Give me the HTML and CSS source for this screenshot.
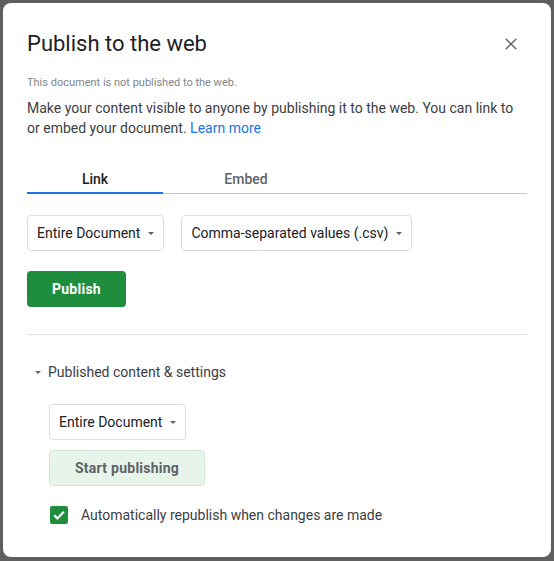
FILE: index.html
```html
<!DOCTYPE html>
<html>
<head>
<meta charset="utf-8">
<link rel="stylesheet" href="styles.css">
</head>
<body>
<div class="dialog">
  <div class="header">
    <h1 class="title">Publish to the web</h1>
    <button class="close" aria-label="Close">
      <svg width="12" height="12" viewBox="0 0 12 12"><path d="M0.7 0.7L11.3 11.3M11.3 0.7L0.7 11.3" stroke="#5f6368" stroke-width="1.4" fill="none"/></svg>
    </button>
  </div>
  <p class="status">This document is not published to the web.</p>
  <p class="desc">Make your content visible to anyone by publishing it to the web. You can link to or embed your document. <a class="link" href="#">Learn more</a></p>
  <div class="tabs">
    <div class="tab active">Link</div>
    <div class="tab embed">Embed</div>
  </div>
  <div class="row">
    <div class="select">Entire Document<span class="caret"></span></div>
    <div class="select">Comma-separated values (.csv)<span class="caret"></span></div>
  </div>
  <button class="btn primary">Publish</button>
  <hr class="divider">
  <div class="section-head"><span class="caret"></span>Published content &amp; settings</div>
  <div class="section-body">
    <div class="select">Entire Document<span class="caret"></span></div>
    <button class="btn secondary">Start publishing</button>
    <label class="check"><span class="box"><svg width="18" height="18" viewBox="0 0 18 18"><path d="M4.2 9.3L7.4 12.4L13.8 5.8" stroke="#fff" stroke-width="2.2" fill="none"/></svg></span>Automatically republish when changes are made</label>
  </div>
</div>
</body>
</html>
```
FILE: styles.css
```css
html, body {
  margin: 0;
  background: #5f5f5f;
}
body {
  padding: 3px;
  font-family: Roboto, "Noto Sans", Arial, sans-serif;
}
.dialog {
  width: 548px;
  height: 554px;
  box-sizing: border-box;
  background: #fff;
  border-radius: 8px;
  padding: 27px 24px 0;
}
.header {
  display: flex;
  align-items: center;
  justify-content: space-between;
  height: 28px;
}
.title {
  margin: 0;
  font-size: 22px;
  line-height: 28px;
  font-weight: 400;
  color: #202124;
}
.close {
  width: 24px;
  height: 24px;
  border: 0;
  background: none;
  padding: 0;
  margin-right: 4px;
  display: flex;
  align-items: center;
  justify-content: center;
}
.status {
  margin: 17px 0 0;
  font-size: 11px;
  line-height: 16px;
  color: #80868b;
}
.desc {
  margin: 7px 0 0;
  font-size: 14px;
  line-height: 20px;
  color: #3c4043;
}
.link {
  color: #1a73e8;
  text-decoration: none;
}
.tabs {
  display: flex;
  margin-top: 20px;
  border-bottom: 1px solid #c4c7c5;
}
.tab {
  width: 136px;
  text-align: center;
  padding: 11px 0 3px;
  font-size: 14px;
  line-height: 20px;
  font-weight: 500;
  color: #5f6368;
  border-bottom: 2px solid transparent;
  margin-bottom: -1px;
}
.tab.active {
  color: #202124;
  border-bottom-color: #1a73e8;
}
.tab.embed {
  width: 166px;
}
.row {
  display: flex;
  gap: 17px;
  margin-top: 21px;
}
.select {
  display: inline-flex;
  align-items: center;
  height: 36px;
  box-sizing: border-box;
  border: 1px solid #dadce0;
  border-radius: 4px;
  padding: 0 9px 0 9px;
  font-size: 14px;
  color: #202124;
  gap: 8px;
}
.caret {
  width: 0;
  height: 0;
  border-left: 3px solid transparent;
  border-right: 3px solid transparent;
  border-top: 3px solid #5f6368;
}
.btn {
  display: block;
  height: 36px;
  box-sizing: border-box;
  border-radius: 4px;
  font-family: inherit;
  font-size: 14px;
  font-weight: 700;
  letter-spacing: 0.25px;
  padding: 0 25px;
}
.primary {
  margin-top: 20px;
  background: #1e8e3e;
  color: #fff;
  border: 0;
}
.divider {
  margin: 27px 0 0;
  border: 0;
  border-top: 1px solid #e0e0e0;
  height: 0;
}
.section-head {
  margin-top: 27px;
  display: flex;
  align-items: center;
  font-size: 14px;
  line-height: 20px;
  color: #3c4043;
  padding-left: 8px;
  gap: 7px;
}
.section-body {
  padding-left: 22px;
  margin-top: 22px;
  display: flex;
  flex-direction: column;
  align-items: flex-start;
}
.secondary {
  margin-top: 10px;
  background: #e6f4ea;
  border: 1px solid #ceead6;
  color: #5f6368;
}
.check {
  margin-top: 19px;
  margin-left: 1px;
  display: flex;
  align-items: center;
  gap: 13px;
  font-size: 14px;
  line-height: 20px;
  color: #3c4043;
}
.box {
  width: 18px;
  height: 18px;
  border-radius: 2px;
  background: #1e8e3e;
  display: flex;
}
```
